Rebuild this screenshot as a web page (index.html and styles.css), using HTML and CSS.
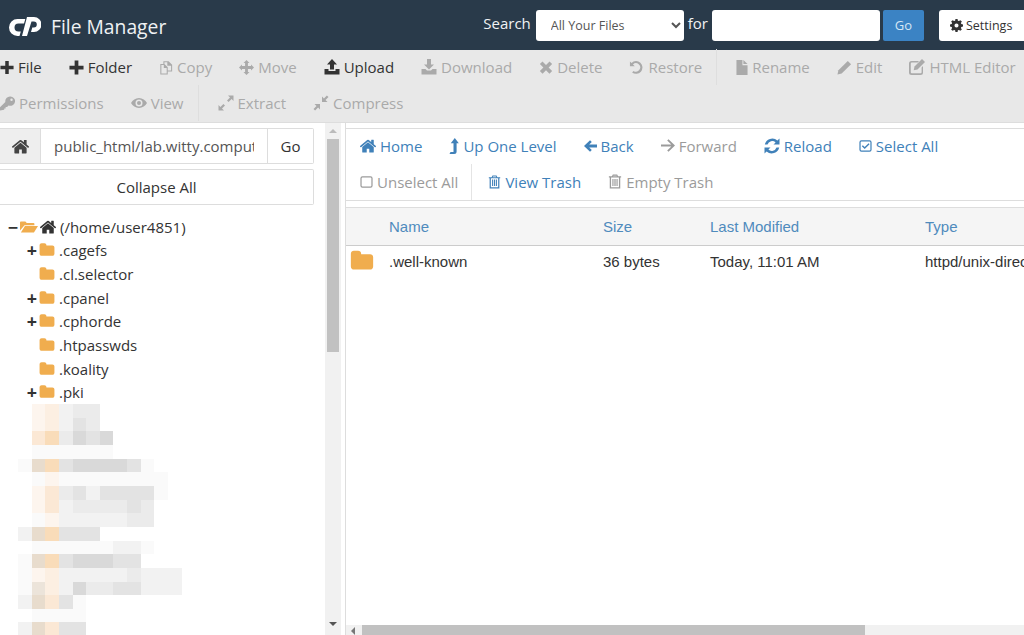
FILE: index.html
```html
<!DOCTYPE html>
<html lang="en">
<head>
  <meta charset="UTF-8">
  <meta name="viewport" content="width=device-width, initial-scale=1.0">
  <title>File Manager</title>
  <link rel="stylesheet" href="styles.css">
</head>
<body>
  <svg class="sprite" xmlns="http://www.w3.org/2000/svg">
    <symbol id="i-plus" viewBox="0 0 16 16"><path d="M6 .5h4V6h5.500v4H10v5.500H6V10H.5V6H6z"/></symbol>
    <symbol id="i-home" viewBox="96 200 1600 1350" preserveAspectRatio="xMidYMid meet"><path d="M1472 992v480q0 26-19 45t-45 19h-384v-384h-256v384h-384q-26 0-45-19t-19-45v-480q0-1 .5-3t.5-3l575-474 575 474q1 2 1 6zm223-69l-62 74q-8 9-21 11h-3q-13 0-21-7l-692-577-692 577q-12 8-24 7-13-2-21-11l-62-74q-8-10-7-23.5t11-21.5l719-599q32-26 76-26t76 26l244 204v-195q0-14 9-23t23-9h192q14 0 23 9t9 23v408l219 182q10 8 11 21.5t-7 23.5z"/></symbol>
    <symbol id="i-folder" viewBox="0 0 1792 1792"><path d="M1728 608v704q0 92-66 158t-158 66h-1216q-92 0-158-66t-66-158v-960q0-92 66-158t158-66h320q92 0 158 66t66 158v32h672q92 0 158 66t66 158z"/></symbol>
    <symbol id="i-folder-open" viewBox="0 0 20 16"><path d="M0 3a1 1 0 0 1 1-1h5l1.500 1.500H15a1 1 0 0 1 1 1V6H5L0 12z"/><path d="M5.500 7H20l-4.500 7H1z"/></symbol>
    <symbol id="i-copy" viewBox="0 0 16 16"><path fill-rule="evenodd" d="M1.500 4H5V.8h6l4 4V12.500H10V16H1.500zM6.200 4 10 7.800v3.500h3.800V6H9.500V2H6.200zM2.700 5.200v9.600H8.800V8.500H5.500V5.200z"/></symbol>
    <symbol id="i-move" viewBox="0 0 16 16"><path d="M8 0l3.200 3.200H9.500v3.300h3.300V4.800L16 8l-3.200 3.200V9.500H9.500v3.300h1.700L8 16l-3.200-3.200h1.700V9.500H3.200v1.700L0 8l3.200-3.200v1.700h3.300V3.200H4.800z"/></symbol>
    <symbol id="i-upload" viewBox="0 0 16 16"><path d="M8 0l5 5.500h-3V10.500H6V5.500H3z"/><path d="M.5 10H4.500v2h7v-2H15.500v5.500H.5z"/></symbol>
    <symbol id="i-download" viewBox="0 0 16 16"><path d="M6 0h4v5.500h3L8 10.500 3 5.500h3z"/><path d="M.5 10H4.500L6 11.500h4L11.500 10H15.500v5.500H.5z"/></symbol>
    <symbol id="i-times" viewBox="0 0 16 16"><path d="M4 1l4 4 4-4L15 4l-4 4 4 4-3 3-4-4-4 4L1 12l4-4-4-4z"/></symbol>
    <symbol id="i-undo" viewBox="0 0 16 16"><path d="M1 1.500l1.700 1.700A6.800 6.800 0 1 1 3.300 13.300l1.500-1.700a4.500 4.500 0 1 0-.6-6.900L6.200 6.700H1z"/></symbol>
    <symbol id="i-file" viewBox="0 0 13 16"><path d="M.5 0h6.500v5.500h5.500V16H.5z"/><path d="M8 0l4.500 4.300H8z"/></symbol>
    <symbol id="i-pencil" viewBox="0 0 16 16"><path d="M11.500 1 15 4.500 5 14.500l-4.500 1 1-4.500z"/></symbol>
    <symbol id="i-edit" viewBox="0 0 16 16"><path fill-rule="evenodd" d="M2.500 2H10L8.700 3.400H2.800a1 1 0 0 0-1 1v8.800a1 1 0 0 0 1 1h8.800a1 1 0 0 0 1-1V8.500L14 7v6.500a2.500 2.500 0 0 1-2.500 2.500h-9A2.500 2.500 0 0 1 0 13.500v-9A2.500 2.500 0 0 1 2.500 2z"/><path d="M13 0l3 3-7.500 7.500-3.800.8.800-3.800z"/></symbol>
    <symbol id="i-key" viewBox="0 0 16 16"><path fill-rule="evenodd" d="M11 .5a5 5 0 1 1-1.900 9.600L7.500 11.700H6v1.500H4.500v1.500L0 15.500V12l5.700-5.700A5 5 0 0 1 11 .5zm1.300 2.200a1.300 1.300 0 1 0 0 2.600 1.300 1.300 0 0 0 0-2.600z"/></symbol>
    <symbol id="i-eye" viewBox="0 0 16 16"><path fill-rule="evenodd" d="M8 3c3.500 0 6.400 2.200 8 5-1.600 2.800-4.500 5-8 5S1.600 10.800 0 8c1.600-2.800 4.500-5 8-5zm0 1.500a3.500 3.500 0 1 0 0 7 3.500 3.500 0 0 0 0-7zm0 1.500a2 2 0 1 1 0 4 2 2 0 0 1 0-4z"/></symbol>
    <symbol id="i-expand" viewBox="0 0 16 16"><path d="M10 .5h5.500V6l-1.900-1.900-3 3-1.600-1.600 3-3zM.5 15.500V10l1.900 1.900 3-3 1.600 1.600-3 3L6 15.500z"/></symbol>
    <symbol id="i-compress" viewBox="0 0 16 16"><path d="M9 7V1.500l1.900 1.900 3-3 1.600 1.600-3 3L14.500 7zM7 9v5.500l-1.900-1.900-3 3L.5 14l3-3L1.500 9z"/></symbol>
    <symbol id="i-cog" viewBox="0 0 16 16"><path fill-rule="evenodd" d="M6.700 0h2.600l.4 2.100 1.300.5L12.800 1.400l1.800 1.800-1.200 1.800.5 1.300 2.100.4v2.600l-2.100.4-.5 1.300 1.200 1.800-1.800 1.800-1.800-1.200-1.300.5-.4 2.100H6.700l-.4-2.100-1.300-.5-1.800 1.200-1.800-1.800L2.600 11l-.5-1.300L0 9.300V6.700l2.100-.4.5-1.300-1.200-1.800 1.800-1.800L5 2.600l1.300-.5zM8 5.500a2.500 2.500 0 1 0 0 5 2.500 2.500 0 0 0 0-5z"/></symbol>
    <symbol id="i-level" viewBox="0 0 10 16"><path d="M5.800 0l4 5.200H7.600v8.300A2.500 2.500 0 0 1 5.100 16H.5l1-2h3V5.200H1.800z"/></symbol>
    <symbol id="i-left" viewBox="0 0 14 14"><path d="M6.500 .8l1.900 1.900-2.800 2.700H14v3.200H5.600l2.800 2.700-1.900 1.900L0 7z"/></symbol>
    <symbol id="i-right" viewBox="0 0 14 14"><path d="M7.500 .8 6.200 2.100 10.300 6H0v2h10.300l-4.100 3.900 1.300 1.300L14 7z"/></symbol>
    <symbol id="i-reload" viewBox="0 0 16 16"><path d="M15.500 .5V6.500H9.500l2.100-2.100A5 5 0 0 0 3.500 6.500H.8A7.600 7.600 0 0 1 13.400 2.600z"/><path d="M.5 15.500V9.500H6.500l-2.100 2.100a5 5 0 0 0 8.100-2.100h2.700A7.600 7.600 0 0 1 2.600 13.400z"/></symbol>
    <symbol id="i-check" viewBox="0 0 16 16"><path fill-rule="evenodd" d="M3 1h10a2.500 2.500 0 0 1 2.500 2.500v9A2.500 2.500 0 0 1 13 15H3a2.500 2.500 0 0 1-2.500-2.500v-9A2.500 2.500 0 0 1 3 1zm0 1.500a1 1 0 0 0-1 1v9a1 1 0 0 0 1 1h10a1 1 0 0 0 1-1v-9a1 1 0 0 0-1-1z"/><path d="M11.800 4.500 13 5.700 7 11.700 3.500 8.200l1.200-1.200L7 9.300z"/></symbol>
    <symbol id="i-square" viewBox="0 0 16 16"><path fill-rule="evenodd" d="M3 1h10a2.500 2.500 0 0 1 2.500 2.500v9A2.500 2.500 0 0 1 13 15H3a2.500 2.500 0 0 1-2.500-2.500v-9A2.500 2.500 0 0 1 3 1zm0 1.500a1 1 0 0 0-1 1v9a1 1 0 0 0 1 1h10a1 1 0 0 0 1-1v-9a1 1 0 0 0-1-1z"/></symbol>
    <symbol id="i-trash" viewBox="0 0 16 16"><path fill-rule="evenodd" d="M5.500 0h5l1 2H15v1.500h-1V16H2V3.500H1V2h3.500zM6.200 1.300l-.4.7h4.400l-.4-.7zM3.500 3.500V14.500h9V3.500zM5 5h1.300v8H5zm2.300 0h1.400v8H7.300zm2.400 0H11v8H9.700z"/></symbol>
  </svg>

  <header class="topbar">
    <svg class="logo" viewBox="0 0 33 21" fill="#fff"><path d="M17.300 3 16 7.500H10.500a4 4 0 0 0 0 8h2.300L11.500 20H9.500a8.500 8.500 0 0 1 0-17z"/><path d="M19 1h7a7.500 7.500 0 0 1 0 15h-3l1.300-4.500h1.500a3 3 0 0 0 0-6H23.500L19 20h-5z"/></svg>
    <span class="app-title">File Manager</span>
    <form class="search">
      <label class="search-label">Search</label>
      <select class="search-scope"><option>All Your Files</option></select>
      <label class="search-label">for</label>
      <input class="search-text" type="text">
      <button class="search-go" type="button">Go</button>
      <button class="settings-btn" type="button"><svg class="ico"><use href="#i-cog"/></svg>Settings</button>
    </form>
  </header>

  <nav class="toolbar">
    <div class="tool-row">
      <a class="tool"><svg class="ico"><use href="#i-plus"/></svg>File</a>
      <a class="tool"><svg class="ico ico-m"><use href="#i-plus"/></svg>Folder</a>
      <a class="tool off"><svg class="ico"><use href="#i-copy"/></svg>Copy</a>
      <a class="tool off"><svg class="ico ico-m"><use href="#i-move"/></svg>Move</a>
      <a class="tool"><svg class="ico ico-l"><use href="#i-upload"/></svg>Upload</a>
      <a class="tool off"><svg class="ico ico-l"><use href="#i-download"/></svg>Download</a>
      <a class="tool off"><svg class="ico"><use href="#i-times"/></svg>Delete</a>
      <a class="tool off"><svg class="ico ico-m"><use href="#i-undo"/></svg>Restore</a>
      <span class="tool-sep"></span>
      <a class="tool off"><svg class="ico ico-s"><use href="#i-file"/></svg>Rename</a>
      <a class="tool off"><svg class="ico ico-m"><use href="#i-pencil"/></svg>Edit</a>
      <a class="tool off"><svg class="ico ico-l"><use href="#i-edit"/></svg>HTML Editor</a>
    </div>
    <div class="tool-row">
      <a class="tool off"><svg class="ico ico-m"><use href="#i-key"/></svg>Permissions</a>
      <a class="tool off"><svg class="ico ico-l"><use href="#i-eye"/></svg>View</a>
      <span class="tool-sep"></span>
      <a class="tool off"><svg class="ico ico-l"><use href="#i-expand"/></svg>Extract</a>
      <a class="tool off"><svg class="ico ico-l"><use href="#i-compress"/></svg>Compress</a>
    </div>
  </nav>

  <main class="workspace">
    <aside class="sidebar">
      <div class="side-content">
        <div class="path-group">
          <span class="path-home"><svg class="ico"><use href="#i-home"/></svg></span>
          <input class="path-input" type="text" value="public_html/lab.witty.computer">
          <button class="path-go" type="button">Go</button>
        </div>
        <button class="collapse-btn" type="button">Collapse All</button>
        <ul class="tree">
          <li class="tree-row"><span class="toggle">&minus;</span><svg class="folder-ico folder-open"><use href="#i-folder-open"/></svg><svg class="ico tree-home"><use href="#i-home"/></svg>(/home/user4851)</li>
          <li class="tree-row sub"><span class="toggle">+</span><svg class="folder-ico"><use href="#i-folder"/></svg>.cagefs</li>
          <li class="tree-row sub"><span class="toggle"></span><svg class="folder-ico"><use href="#i-folder"/></svg>.cl.selector</li>
          <li class="tree-row sub"><span class="toggle">+</span><svg class="folder-ico"><use href="#i-folder"/></svg>.cpanel</li>
          <li class="tree-row sub"><span class="toggle">+</span><svg class="folder-ico"><use href="#i-folder"/></svg>.cphorde</li>
          <li class="tree-row sub"><span class="toggle"></span><svg class="folder-ico"><use href="#i-folder"/></svg>.htpasswds</li>
          <li class="tree-row sub"><span class="toggle"></span><svg class="folder-ico"><use href="#i-folder"/></svg>.koality</li>
          <li class="tree-row sub"><span class="toggle">+</span><svg class="folder-ico"><use href="#i-folder"/></svg>.pki</li>
        </ul>
        <!-- blurred out part of the tree -->
        <div class="mosaic">
          <div class="m-row"><i></i><i class="o1"></i><i class="o2"></i><i class="g1"></i><i class="g2"></i><i class="g2"></i></div>
          <div class="m-row"><i></i><i class="o1"></i><i class="o2"></i><i class="g1"></i><i class="g3"></i><i class="g2"></i></div>
          <div class="m-row"><i></i><i class="o3"></i><i class="o4"></i><i class="g2"></i><i class="g4"></i><i class="g3"></i><i class="g4"></i></div>
          <div class="m-row"><i></i><i class="g0"></i><i class="g0"></i><i class="g0"></i><i class="g0"></i><i class="g0"></i><i class="g0"></i></div>
          <div class="m-row"><i class="g0"></i><i class="t1"></i><i class="o4"></i><i class="g3"></i><i class="g4"></i><i class="g4"></i><i class="g4"></i><i class="g4"></i><i class="g3"></i><i class="g0"></i></div>
          <div class="m-row"><i></i><i class="g0"></i><i class="o1"></i><i class="g0"></i><i class="g0"></i><i class="g0"></i><i class="g0"></i><i class="g0"></i><i class="g0"></i><i class="g0"></i><i class="g0"></i></div>
          <div class="m-row"><i></i><i class="o1"></i><i class="o3"></i><i class="g2"></i><i class="g3"></i><i class="g1"></i><i class="g3"></i><i class="g3"></i><i class="g3"></i><i class="g3"></i><i class="g0"></i></div>
          <div class="m-row"><i></i><i class="o1"></i><i class="o3"></i><i class="g1"></i><i class="g2"></i><i class="g2"></i><i class="g2"></i><i class="g2"></i><i class="g3"></i><i class="g2"></i></div>
          <div class="m-row"><i></i><i class="g0"></i><i class="o1"></i><i class="g1"></i><i class="g1"></i><i class="g1"></i><i class="g1"></i><i class="g1"></i><i class="g2"></i><i class="g2"></i></div>
          <div class="m-row"><i class="g1"></i><i class="t1"></i><i class="o4"></i><i class="g3"></i><i class="g3"></i><i class="g3"></i></div>
          <div class="m-row"><i></i><i class="g0"></i><i class="g0"></i><i class="g0"></i><i class="g0"></i><i class="g0"></i><i class="g0"></i><i class="g1"></i><i class="g1"></i><i class="g0"></i></div>
          <div class="m-row"><i class="g0"></i><i class="t1"></i><i class="o4"></i><i class="g3"></i><i class="g4"></i><i class="g4"></i><i class="g4"></i><i class="g3"></i><i class="g3"></i></div>
          <div class="m-row"><i class="g0"></i><i class="o1"></i><i class="o2"></i><i class="g1"></i><i class="g1"></i><i class="g1"></i><i class="g1"></i><i class="g1"></i><i class="g2"></i><i class="g1"></i><i class="g1"></i><i class="g1"></i></div>
          <div class="m-row"><i class="g0"></i><i class="t2"></i><i class="o2"></i><i class="g1"></i><i class="g4"></i><i class="g2"></i><i class="g2"></i><i class="g3"></i><i class="g3"></i><i class="g1"></i><i class="g1"></i><i class="g1"></i></div>
          <div class="m-row"><i class="g1"></i><i class="t1"></i><i class="o3"></i><i class="g3"></i><i class="g0"></i></div>
          <div class="m-row"><i></i><i class="g0"></i><i class="g0"></i><i class="g0"></i><i class="g0"></i></div>
          <div class="m-row"><i class="g1"></i><i class="t1"></i><i class="o3"></i><i class="g3"></i><i class="g3"></i></div>
        </div>
      </div>
      <div class="vscroll">
        <span class="arrow arrow-up"></span>
        <span class="vthumb"></span>
        <span class="arrow arrow-down"></span>
      </div>
    </aside>

    <section class="pane">
      <div class="actions">
        <div class="action-row">
          <a class="action"><svg class="ico ico-l"><use href="#i-home"/></svg>Home</a>
          <a class="action"><svg class="ico ico-n"><use href="#i-level"/></svg>Up One Level</a>
          <a class="action"><svg class="ico ico-a"><use href="#i-left"/></svg>Back</a>
          <a class="action off"><svg class="ico"><use href="#i-right"/></svg>Forward</a>
          <a class="action"><svg class="ico ico-l"><use href="#i-reload"/></svg>Reload</a>
          <a class="action"><svg class="ico ico-a"><use href="#i-check"/></svg>Select All</a>
        </div>
        <div class="action-row">
          <a class="action off"><svg class="ico ico-a"><use href="#i-square"/></svg>Unselect All</a>
          <span class="tool-sep"></span>
          <a class="action"><svg class="ico ico-a"><use href="#i-trash"/></svg>View Trash</a>
          <a class="action off"><svg class="ico"><use href="#i-trash"/></svg>Empty Trash</a>
        </div>
      </div>
      <div class="list-wrap">
        <table class="file-table">
          <thead>
            <tr><th class="col-icon"></th><th class="col-name">Name</th><th class="col-size">Size</th><th class="col-date">Last Modified</th><th class="col-type">Type</th></tr>
          </thead>
          <tbody>
            <tr><td><svg class="row-folder"><use href="#i-folder"/></svg></td><td>.well-known</td><td>36 bytes</td><td>Today, 11:01 AM</td><td>httpd/unix-directory</td></tr>
          </tbody>
        </table>
      </div>
      <div class="hscroll">
        <span class="arrow arrow-left"></span>
        <span class="hthumb"></span>
      </div>
    </section>
  </main>
</body>
</html>
```

FILE: styles.css
```css
html, body {
  margin: 0;
  height: 635px;
  overflow: hidden;
}

body {
  font-family: "Open Sans", sans-serif;
  font-size: 15px;
  color: #333;
  background: #fff;
  display: flex;
  flex-direction: column;
}

.sprite {
  display: none;
}

.ico {
  width: 14px;
  height: 15px;
  fill: currentColor;
  flex: none;
}

.ico-s { width: 12px; height: 15px; }
.ico-m { width: 15px; }
.ico-l { width: 16px; height: 16px; }
.ico-n { width: 10px; height: 16px; }
.ico-a { width: 13px; height: 14px; }

/* top bar */
.topbar {
  height: 50px;
  background: #293a4a;
  color: #fff;
  display: flex;
  align-items: center;
  flex: none;
  padding-left: 8px;
}

.logo {
  width: 33px;
  height: 21px;
  margin-top: 3px;
}

.app-title {
  font-size: 19.300px;
  margin-left: 10px;
  margin-top: 3px;
  color: #f0f2f4;
}

.search {
  margin-left: auto;
  margin-right: -12px;
  display: flex;
  align-items: center;
}

.search-label {
  font-size: 15px;
  margin: 0 4px 5px 0;
  color: #f0f2f4;
}

.search-label:first-child {
  margin-right: 5px;
}

.search-scope {
  width: 148px;
  height: 31px;
  border: 0;
  border-radius: 3px;
  background: #fff;
  color: #555;
  font: 12.500px "Open Sans", sans-serif;
  padding-left: 11px;
  margin-right: 4px;
}

.search-text {
  width: 168px;
  height: 31px;
  box-sizing: border-box;
  border: 0;
  border-radius: 3px;
  background: #fff;
  margin-right: 3px;
}

.search-go {
  width: 41px;
  height: 31px;
  border: 0;
  border-radius: 2px;
  background: #3b83c4;
  color: #d5e6f5;
  font: 13px "Open Sans", sans-serif;
  margin-right: 15px;
}

.settings-btn {
  width: 97px;
  height: 31px;
  border: 0;
  border-radius: 3px 0 0 3px;
  background: #fff;
  color: #333;
  font: 12.500px "Open Sans", sans-serif;
  display: flex;
  align-items: center;
  gap: 3px;
  padding: 0 0 0 11px;
}

.settings-btn .ico {
  width: 13px;
  height: 13px;
}

/* main toolbar */
.toolbar {
  height: 73px;
  box-sizing: border-box;
  flex: none;
  background: #e8e8e8;
  border-bottom: 1px solid #ddd;
}

.tool-row {
  height: 36px;
  box-sizing: border-box;
  padding-bottom: 2px;
  display: flex;
  align-items: center;
  gap: 27px;
  white-space: nowrap;
}

.tool {
  display: flex;
  align-items: center;
  gap: 4px;
  color: #333;
}

.tool.off {
  color: #aaa;
}

.tool-sep {
  width: 1px;
  height: 36px;
  background: #dedede;
  margin: 0 -8px 0 -13px;
  flex: none;
}

/* workspace */
.workspace {
  flex: 1;
  min-height: 0;
  display: flex;
}

.sidebar {
  width: 345px;
  flex: none;
  display: flex;
}

.side-content {
  width: 325px;
  flex: none;
  padding-top: 5px;
  overflow: hidden;
}

.path-group {
  width: 314px;
  height: 36px;
  box-sizing: border-box;
  display: flex;
  border: 1px solid #ddd;
  border-left: 0;
  border-radius: 0 2px 2px 0;
}

.path-home {
  width: 40px;
  background: #eee;
  border-right: 1px solid #ddd;
  display: flex;
  align-items: center;
  justify-content: center;
  color: #444;
}

.path-home .ico {
  width: 17px;
  height: 17px;
}

.path-input {
  width: 226px;
  box-sizing: border-box;
  min-width: 0;
  border: 0;
  padding: 0 13px;
  color: #555;
  font: 15px "Open Sans", sans-serif;
}

.path-go {
  flex: 1;
  border: 0;
  border-left: 1px solid #ddd;
  background: #fff;
  color: #333;
  font: 15px "Open Sans", sans-serif;
  padding: 0;
}

.collapse-btn {
  display: block;
  width: 314px;
  height: 36px;
  margin-top: 5px;
  border: 1px solid #ddd;
  border-left: 0;
  border-radius: 0 2px 2px 0;
  background: #fff;
  color: #333;
  font: 15px "Open Sans", sans-serif;
}

.tree {
  list-style: none;
  margin: 9.700px 0 0;
  padding: 0 0 0 7px;
}

.tree-row {
  height: 23.700px;
  display: flex;
  align-items: center;
  white-space: nowrap;
}

.tree-row.sub {
  padding-left: 19px;
}

.toggle {
  width: 12px;
  margin-right: 1px;
  font-weight: 700;
  font-size: 18px;
  line-height: 1;
  text-align: center;
  flex: none;
}

.folder-ico {
  width: 16px;
  height: 16px;
  fill: #f0ad4e;
  margin-right: 4px;
  flex: none;
}

.folder-open {
  width: 18px;
  margin-right: 2px;
}

.tree-home {
  width: 16px;
  height: 16px;
  margin-right: 4px;
}

/* pixelated rows, each cell is one mosaic block */
.mosaic {
  margin: 0 0 0 18px;
  filter: blur(.6px);
}

.m-row {
  display: flex;
  height: 13.650px;
}

.m-row i {
  width: 13.650px;
  flex: none;
}

.o1 { background: #fdf5ee; }
.o2 { background: #fcefe2; }
.o3 { background: #fbe8d5; }
.o4 { background: #f9dcb9; }
.t1 { background: #e8dccd; }
.t2 { background: #ece4da; }
.g0 { background: #fafafa; }
.g1 { background: #f2f2f2; }
.g2 { background: #ebebeb; }
.g3 { background: #e3e3e3; }
.g4 { background: #d9d9d9; }

/* fake scrollbars */
.vscroll {
  width: 16px;
  height: 512px;
  background: #f1f1f1;
  position: relative;
  display: flex;
  flex-direction: column;
  align-items: center;
}

.vthumb {
  width: 12px;
  height: 213px;
  background: #c1c1c1;
  margin-top: 16px;
}

.arrow {
  width: 0;
  height: 0;
  border: 4px solid transparent;
  position: absolute;
}

.arrow-up {
  top: 6px;
  border-top: 0;
  border-bottom-color: #bbb;
}

.arrow-down {
  bottom: 9px;
  border-bottom: 0;
  border-top-color: #555;
}

.arrow-left {
  left: 5px;
  top: 2px;
  border-left: 0;
  border-right-color: #777;
}

.pane {
  flex: 1;
  min-width: 0;
  display: flex;
  flex-direction: column;
  border-left: 1px solid #ddd;
  position: relative;
  overflow: hidden;
}

.actions {
  height: 73px;
  box-sizing: border-box;
  margin-top: 5px;
  border-top: 1px solid #ddd;
  border-bottom: 1px solid #ddd;
  padding-left: 14px;
  flex: none;
}

.action-row {
  height: 36px;
  box-sizing: border-box;
  padding-bottom: 3px;
  display: flex;
  align-items: center;
  gap: 27px;
  white-space: nowrap;
}

.action-row .tool-sep {
  background: #e4e4e4;
  margin: 0 -11px 0 -14px;
}

.action {
  display: flex;
  align-items: center;
  gap: 4px;
  color: #4081b9;
}

.action.off {
  color: #9b9b9b;
}

.list-wrap {
  flex: 1;
  min-height: 0;
  margin-top: 6px;
  border-top: 1px solid #ddd;
  overflow: hidden;
}

.file-table {
  width: 779px;
  table-layout: fixed;
  border-collapse: collapse;
  font-family: "Liberation Sans", sans-serif;
  font-size: 15px;
  white-space: nowrap;
}

.file-table th {
  height: 37px;
  padding: 0;
  background: #f5f5f5;
  border-bottom: 1px solid #ccc;
  color: #4f8bbd;
  font-weight: 400;
  text-align: left;
}

.file-table td {
  height: 30px;
  padding: 0;
  color: #333;
  vertical-align: middle;
}

.col-icon { width: 43px; }
.col-name { width: 214px; }
.col-size { width: 107px; }
.col-date { width: 215px; }
.col-type { width: 200px; }

.row-folder {
  display: block;
  width: 24px;
  height: 24px;
  margin-left: 4px;
  fill: #f0ad4e;
}

.hscroll {
  height: 10px;
  flex: none;
  background: #f1f1f1;
  display: flex;
  position: relative;
}

.hthumb {
  width: 503px;
  height: 10px;
  background: #c1c1c1;
  margin-left: 16px;
}
```
